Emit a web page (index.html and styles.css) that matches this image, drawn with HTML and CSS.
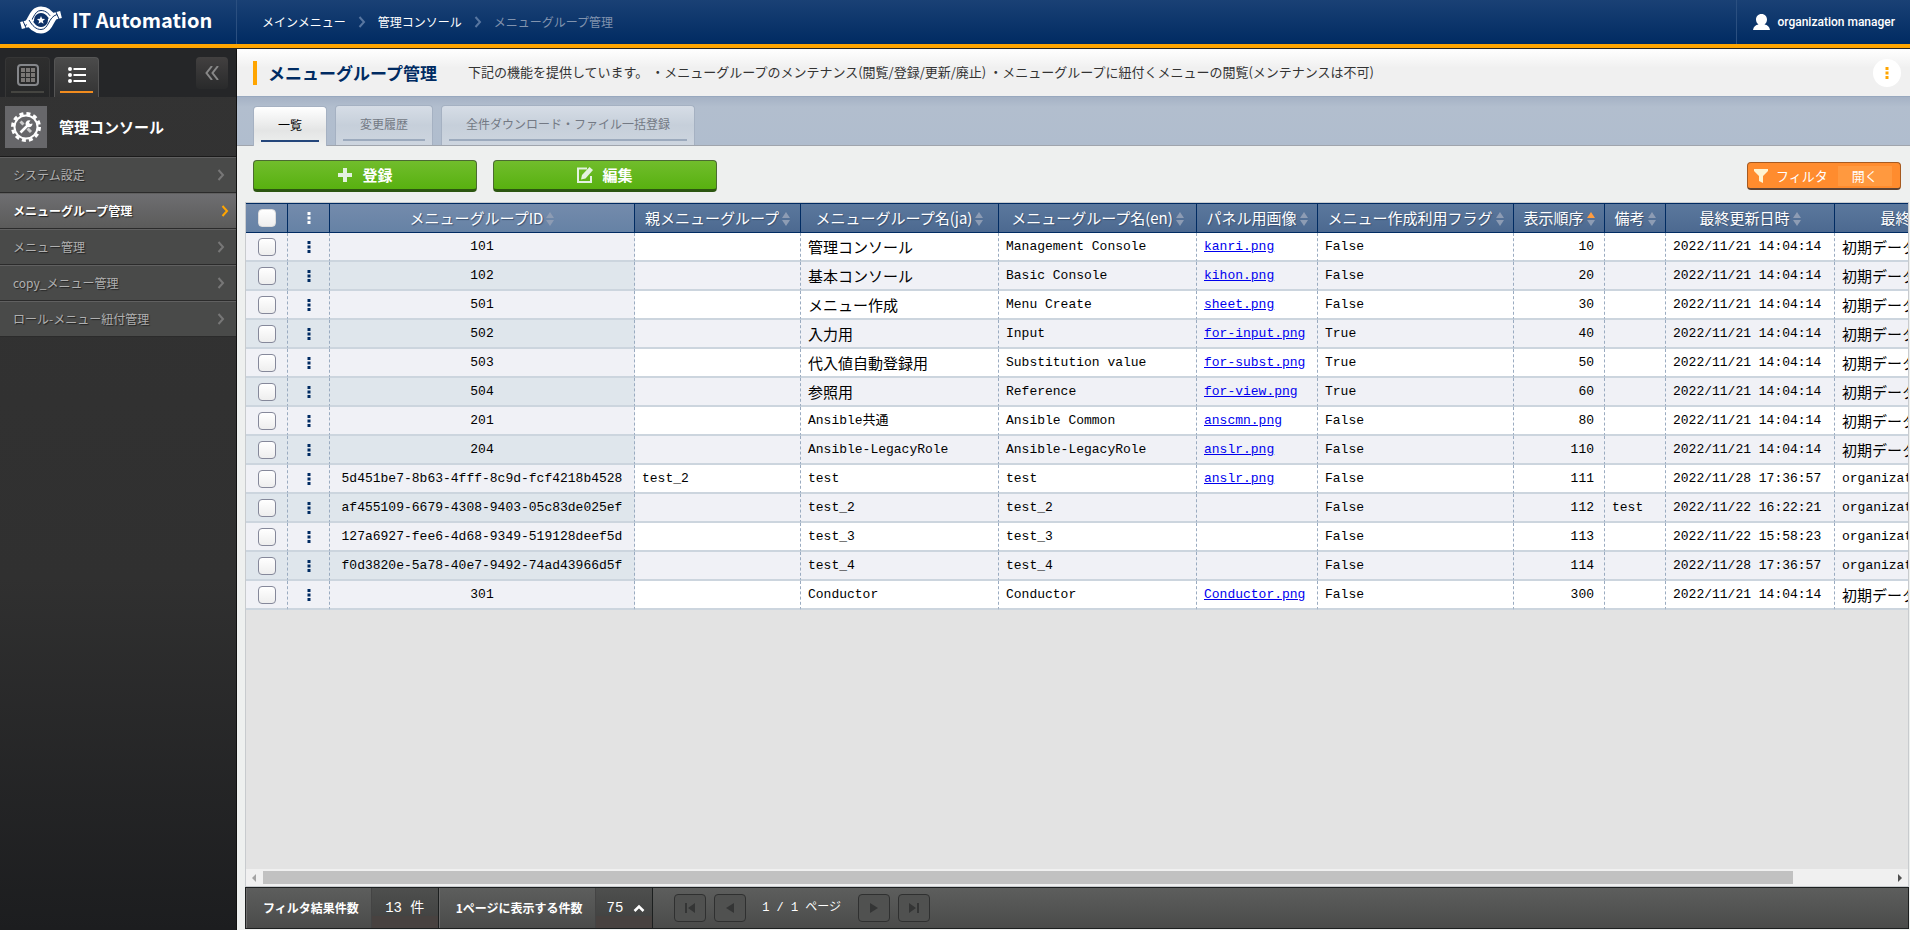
FILE: index.html
```html
<!doctype html>
<html lang="ja">
<head>
    <meta charset="UTF-8">
    <meta name="viewport" content="width=device-width, initial-scale=1.0">
    <title>メニューグループ管理 | IT Automation</title>
    <link rel="stylesheet" href="styles.css">
</head>
<body>
    <!-- 共通アイコン -->
    <svg class="sprite" aria-hidden="true">
        <symbol id="arrow" viewBox="0 0 8 12"><path d="M1.500 1l4.500 5-4.500 5" fill="none" stroke="currentColor" stroke-width="2"/></symbol>
        <symbol id="dots" viewBox="0 0 4 14"><path d="M.5 1h3v3h-3zM.5 5.500h3v3h-3zM.5 10h3v3h-3z" fill="currentColor"/></symbol>
        <symbol id="sort" viewBox="0 0 8 14"><path d="M4 0l4 6H0z" fill="currentColor"/><path d="M4 14L0 8h8z" fill="#8d9cb4"/></symbol>
    </svg>

    <header class="header">
        <a class="logo" href="#">
            <svg class="logo-mark" viewBox="0 0 42 28">
                <g id="arm">
                    <path d="M1 19.500l6-1.500C12 15 12 4 21 4c6 0 10 4 13 10" fill="none" stroke="#fff" stroke-width="7"/>
                    <path d="M5 19.500C14 17 13 4.500 21 4.500c5 0 8.500 3.500 12 9.500" fill="none" stroke="#0d3167" stroke-width="1"/>
                    <path d="M3 15l3 7" stroke="#0d3167" stroke-width="1"/>
                </g>
                <use href="#arm" transform="rotate(180 21 14)"/>
                <circle cx="21" cy="14" r="7" fill="#0d3167"/>
                <path d="M21 10l1.100 2.800 3 .200-2.300 1.900.800 2.900-2.600-1.600-2.600 1.600.800-2.900-2.300-1.900 3-.200z" fill="#fff"/>
            </svg>
            <span>IT Automation</span>
        </a>
        <nav class="breadcrumb">
            <a href="#">メインメニュー</a>
            <svg class="arrow"><use href="#arrow"/></svg>
            <a href="#">管理コンソール</a>
            <svg class="arrow"><use href="#arrow"/></svg>
            <span class="current">メニューグループ管理</span>
        </nav>
        <button type="button" class="user">
            <svg class="user-icon" viewBox="0 0 17 16"><path d="M8.500 0C12 0 14 2.500 14 5.500c0 2-1 4-2.500 5 3 .5 5 2 5.500 5.500H0c.5-3.500 2.500-5 5.500-5.500C4 9.500 3 7.500 3 5.500 3 2.500 5 0 8.500 0z" fill="#fff"/></svg>
            organization manager
        </button>
    </header>

    <div class="container">
        <aside class="side">
            <div class="side-tabs">
                <button type="button" class="side-tab" aria-label="メニューグループ">
                    <svg class="icon-grid" viewBox="0 0 22 22"><rect x="1" y="1" width="20" height="20" rx="3" fill="none" stroke="#85878b" stroke-width="2"/><path d="M4 4h4v4H4zM9 4h4v4H9zM14 4h4v4h-4zM4 9h4v4H4zM9 9h4v4H9zM14 9h4v4h-4zM4 14h4v4H4zM9 14h4v4H9zM14 14h4v4h-4z" fill="#7b7876"/></svg>
                </button>
                <button type="button" class="side-tab open" aria-label="メニュー">
                    <svg class="icon-list" viewBox="0 0 18 16"><g fill="#fff"><circle cx="2" cy="2" r="2"/><circle cx="2" cy="8" r="2"/><circle cx="2" cy="14" r="2"/><path d="M5.500 1H18v2H5.500zM5.500 7H18v2H5.500zM5.500 13H18v2H5.500z"/></g></svg>
                </button>
                <button type="button" class="side-close" aria-label="閉じる">
                    <svg class="icon-close" viewBox="0 0 14 14"><path d="M7 0L1.500 7 7 14M13 0L7.500 7 13 14" fill="none" stroke="currentColor" stroke-width="2"/></svg>
                </button>
            </div>
            <div class="side-title">
                <span class="side-title-icon">
                    <svg class="icon-gear" viewBox="0 0 30 30">
                        <circle cx="15" cy="15" r="13.500" fill="none" stroke="#fff" stroke-width="3" stroke-dasharray="4 3.070"/>
                        <circle cx="15" cy="15" r="11.500" fill="none" stroke="#fff" stroke-width="2"/>
                        <path d="M9.500 9.500l3 3M16.500 16.500l3.500 3.500" stroke="#ccc" stroke-width="3"/>
                        <path d="M9.500 20.500l8-8" stroke="#fff" stroke-width="2.500"/>
                        <path d="M19.500 8.500a3.500 3.500 0 1 0 2 3l-2.500.500-1-1.500z" fill="#fff"/>
                    </svg>
                </span>
                管理コンソール
            </div>
            <ul class="side-menu">
                <li><a href="#">システム設定<svg class="arrow"><use href="#arrow"/></svg></a></li>
                <li><a href="#" class="current">メニューグループ管理<svg class="arrow"><use href="#arrow"/></svg></a></li>
                <li><a href="#">メニュー管理<svg class="arrow"><use href="#arrow"/></svg></a></li>
                <li><a href="#">copy_メニュー管理<svg class="arrow"><use href="#arrow"/></svg></a></li>
                <li><a href="#">ロール-メニュー紐付管理<svg class="arrow"><use href="#arrow"/></svg></a></li>
            </ul>
        </aside>

        <main class="main">
            <div class="page-header">
                <h1>メニューグループ管理</h1>
                <p>下記の機能を提供しています。 ・メニューグループのメンテナンス(閲覧/登録/更新/廃止) ・メニューグループに紐付くメニューの閲覧(メンテナンスは不可)</p>
                <button type="button" class="page-menu" aria-label="メニュー"><svg class="dots"><use href="#dots"/></svg></button>
            </div>
            <div class="tabs">
                <button type="button" class="tab open"><span>一覧</span></button>
                <button type="button" class="tab"><span>変更履歴</span></button>
                <button type="button" class="tab"><span>全件ダウンロード・ファイル一括登録</span></button>
            </div>
            <div class="toolbar">
                <button type="button" class="action">
                    <svg class="action-icon" viewBox="0 0 16 16"><path d="M6 1h4v5h5v4h-5v5H6v-5H1V6h5z" fill="#e4f2e0"/></svg>登録
                </button>
                <button type="button" class="action">
                    <svg class="action-icon" viewBox="0 0 16 16"><path d="M10 1.500H1v13.500h13V9" fill="none" stroke="#e4f2e0" stroke-width="2"/><path d="M4 12.500l1-4.500L12.500 0 16 3 8.500 11.500z" fill="#e4f2e0"/></svg>編集
                </button>
                <button type="button" class="filter">
                    <svg class="filter-icon" viewBox="0 0 14 14"><path d="M0 0h14v2L9 7v7l-4-2V7L0 2z" fill="#fff3d0"/></svg>
                    <span class="filter-name">フィルタ</span>
                    <span class="filter-state">開く</span>
                </button>
            </div>

            <div class="table-box">
                <div class="table-scroll">
                    <table>
                        <colgroup>
                            <col class="w-check"><col class="w-menu"><col class="w-id"><col class="w-parent"><col class="w-ja"><col class="w-en"><col class="w-image"><col class="w-flag"><col class="w-order"><col class="w-note"><col class="w-date"><col class="w-user">
                        </colgroup>
                        <thead>
                            <tr>
                                <th class="fix"><input type="checkbox" aria-label="すべて選択"></th>
                                <th class="fix"><svg class="dots"><use href="#dots"/></svg></th>
                                <th class="fix">メニューグループID<svg class="sort"><use href="#sort"/></svg></th>
                                <th>親メニューグループ<svg class="sort"><use href="#sort"/></svg></th>
                                <th>メニューグループ名(ja)<svg class="sort"><use href="#sort"/></svg></th>
                                <th>メニューグループ名(en)<svg class="sort"><use href="#sort"/></svg></th>
                                <th>パネル用画像<svg class="sort"><use href="#sort"/></svg></th>
                                <th>メニュー作成利用フラグ<svg class="sort"><use href="#sort"/></svg></th>
                                <th>表示順序<svg class="sort asc"><use href="#sort"/></svg></th>
                                <th>備考<svg class="sort"><use href="#sort"/></svg></th>
                                <th>最終更新日時<svg class="sort"><use href="#sort"/></svg></th>
                                <th>最終更新者<svg class="sort"><use href="#sort"/></svg></th>
                            </tr>
                        </thead>
                        <tbody>
                            <tr>
                                <td class="fix"><input type="checkbox" aria-label="101"></td>
                                <td class="fix"><svg class="dots"><use href="#dots"/></svg></td>
                                <td class="fix">101</td>
                                <td></td>
                                <td class="ja">管理コンソール</td>
                                <td>Management Console</td>
                                <td><a href="#">kanri.png</a></td>
                                <td>False</td>
                                <td class="num">10</td>
                                <td></td>
                                <td>2022/11/21 14:04:14</td>
                                <td class="ja">初期データ</td>
                            </tr>
                            <tr>
                                <td class="fix"><input type="checkbox" aria-label="102"></td>
                                <td class="fix"><svg class="dots"><use href="#dots"/></svg></td>
                                <td class="fix">102</td>
                                <td></td>
                                <td class="ja">基本コンソール</td>
                                <td>Basic Console</td>
                                <td><a href="#">kihon.png</a></td>
                                <td>False</td>
                                <td class="num">20</td>
                                <td></td>
                                <td>2022/11/21 14:04:14</td>
                                <td class="ja">初期データ</td>
                            </tr>
                            <tr>
                                <td class="fix"><input type="checkbox" aria-label="501"></td>
                                <td class="fix"><svg class="dots"><use href="#dots"/></svg></td>
                                <td class="fix">501</td>
                                <td></td>
                                <td class="ja">メニュー作成</td>
                                <td>Menu Create</td>
                                <td><a href="#">sheet.png</a></td>
                                <td>False</td>
                                <td class="num">30</td>
                                <td></td>
                                <td>2022/11/21 14:04:14</td>
                                <td class="ja">初期データ</td>
                            </tr>
                            <tr>
                                <td class="fix"><input type="checkbox" aria-label="502"></td>
                                <td class="fix"><svg class="dots"><use href="#dots"/></svg></td>
                                <td class="fix">502</td>
                                <td></td>
                                <td class="ja">入力用</td>
                                <td>Input</td>
                                <td><a href="#">for-input.png</a></td>
                                <td>True</td>
                                <td class="num">40</td>
                                <td></td>
                                <td>2022/11/21 14:04:14</td>
                                <td class="ja">初期データ</td>
                            </tr>
                            <tr>
                                <td class="fix"><input type="checkbox" aria-label="503"></td>
                                <td class="fix"><svg class="dots"><use href="#dots"/></svg></td>
                                <td class="fix">503</td>
                                <td></td>
                                <td class="ja">代入値自動登録用</td>
                                <td>Substitution value</td>
                                <td><a href="#">for-subst.png</a></td>
                                <td>True</td>
                                <td class="num">50</td>
                                <td></td>
                                <td>2022/11/21 14:04:14</td>
                                <td class="ja">初期データ</td>
                            </tr>
                            <tr>
                                <td class="fix"><input type="checkbox" aria-label="504"></td>
                                <td class="fix"><svg class="dots"><use href="#dots"/></svg></td>
                                <td class="fix">504</td>
                                <td></td>
                                <td class="ja">参照用</td>
                                <td>Reference</td>
                                <td><a href="#">for-view.png</a></td>
                                <td>True</td>
                                <td class="num">60</td>
                                <td></td>
                                <td>2022/11/21 14:04:14</td>
                                <td class="ja">初期データ</td>
                            </tr>
                            <tr>
                                <td class="fix"><input type="checkbox" aria-label="201"></td>
                                <td class="fix"><svg class="dots"><use href="#dots"/></svg></td>
                                <td class="fix">201</td>
                                <td></td>
                                <td>Ansible共通</td>
                                <td>Ansible Common</td>
                                <td><a href="#">anscmn.png</a></td>
                                <td>False</td>
                                <td class="num">80</td>
                                <td></td>
                                <td>2022/11/21 14:04:14</td>
                                <td class="ja">初期データ</td>
                            </tr>
                            <tr>
                                <td class="fix"><input type="checkbox" aria-label="204"></td>
                                <td class="fix"><svg class="dots"><use href="#dots"/></svg></td>
                                <td class="fix">204</td>
                                <td></td>
                                <td>Ansible-LegacyRole</td>
                                <td>Ansible-LegacyRole</td>
                                <td><a href="#">anslr.png</a></td>
                                <td>False</td>
                                <td class="num">110</td>
                                <td></td>
                                <td>2022/11/21 14:04:14</td>
                                <td class="ja">初期データ</td>
                            </tr>
                            <tr>
                                <td class="fix"><input type="checkbox" aria-label="test"></td>
                                <td class="fix"><svg class="dots"><use href="#dots"/></svg></td>
                                <td class="fix">5d451be7-8b63-4fff-8c9d-fcf4218b4528</td>
                                <td>test_2</td>
                                <td>test</td>
                                <td>test</td>
                                <td><a href="#">anslr.png</a></td>
                                <td>False</td>
                                <td class="num">111</td>
                                <td></td>
                                <td>2022/11/28 17:36:57</td>
                                <td>organization manager</td>
                            </tr>
                            <tr>
                                <td class="fix"><input type="checkbox" aria-label="test_2"></td>
                                <td class="fix"><svg class="dots"><use href="#dots"/></svg></td>
                                <td class="fix">af455109-6679-4308-9403-05c83de025ef</td>
                                <td></td>
                                <td>test_2</td>
                                <td>test_2</td>
                                <td></td>
                                <td>False</td>
                                <td class="num">112</td>
                                <td>test</td>
                                <td>2022/11/22 16:22:21</td>
                                <td>organization manager</td>
                            </tr>
                            <tr>
                                <td class="fix"><input type="checkbox" aria-label="test_3"></td>
                                <td class="fix"><svg class="dots"><use href="#dots"/></svg></td>
                                <td class="fix">127a6927-fee6-4d68-9349-519128deef5d</td>
                                <td></td>
                                <td>test_3</td>
                                <td>test_3</td>
                                <td></td>
                                <td>False</td>
                                <td class="num">113</td>
                                <td></td>
                                <td>2022/11/22 15:58:23</td>
                                <td>organization manager</td>
                            </tr>
                            <tr>
                                <td class="fix"><input type="checkbox" aria-label="test_4"></td>
                                <td class="fix"><svg class="dots"><use href="#dots"/></svg></td>
                                <td class="fix">f0d3820e-5a78-40e7-9492-74ad43966d5f</td>
                                <td></td>
                                <td>test_4</td>
                                <td>test_4</td>
                                <td></td>
                                <td>False</td>
                                <td class="num">114</td>
                                <td></td>
                                <td>2022/11/28 17:36:57</td>
                                <td>organization manager</td>
                            </tr>
                            <tr>
                                <td class="fix"><input type="checkbox" aria-label="301"></td>
                                <td class="fix"><svg class="dots"><use href="#dots"/></svg></td>
                                <td class="fix">301</td>
                                <td></td>
                                <td>Conductor</td>
                                <td>Conductor</td>
                                <td><a href="#">Conductor.png</a></td>
                                <td>False</td>
                                <td class="num">300</td>
                                <td></td>
                                <td>2022/11/21 14:04:14</td>
                                <td class="ja">初期データ</td>
                            </tr>
                        </tbody>
                    </table>
                </div>
                <div class="scrollbar">
                    <svg class="scroll-arrow" viewBox="0 0 17 17"><path d="M10 5v8L6 9z" fill="#a3a3a3"/></svg>
                    <div class="scroll-track"><div class="scroll-thumb"></div></div>
                    <svg class="scroll-arrow" viewBox="0 0 17 17"><path d="M7 5v8l4-4z" fill="#505050"/></svg>
                </div>
            </div>

            <footer class="table-footer">
                <div class="foot-label">フィルタ結果件数</div>
                <div class="foot-value foot-count">13 件</div>
                <label class="foot-label" for="rows">1ページに表示する件数</label>
                <div class="foot-value foot-select">
                    <select id="rows"><option>75</option></select>
                    <svg class="icon-up" viewBox="0 0 12 8"><path d="M1.500 7L6 2.500 10.500 7" fill="none" stroke="#fff" stroke-width="2.500"/></svg>
                </div>
                <div class="paging">
                    <button type="button" disabled aria-label="最初"><svg viewBox="0 0 10 12"><path d="M0 1h2v10H0zM10 1v10L3 6z"/></svg></button>
                    <button type="button" disabled aria-label="前"><svg viewBox="0 0 10 12"><path d="M9 1v10L1 6z"/></svg></button>
                    <span>1 / 1 ページ</span>
                    <button type="button" disabled aria-label="次"><svg viewBox="0 0 10 12"><path d="M1 1v10l8-5z"/></svg></button>
                    <button type="button" disabled aria-label="最後"><svg viewBox="0 0 10 12"><path d="M8 1h2v10H8zM0 1v10l7-5z"/></svg></button>
                </div>
            </footer>
        </main>
    </div>
</body>
</html>
```
FILE: styles.css
```css
* {
    box-sizing: border-box;
}
body {
    display: flex;
    flex-direction: column;
    height: 100vh;
    margin: 0;

    font: 12px/20px "Noto Sans CJK JP", sans-serif;
    color: #222;
    background: #eef0ef;
}
button {
    padding: 0;
    border: 0;
    font: inherit;
    color: inherit;
    background: none;
}
.header a,
.side a {
    text-decoration: none;
    color: inherit;
}
svg {
    display: block;
    flex: none;
}
.sprite {
    position: absolute;
    width: 0;
    height: 0;
}
.arrow {
    width: 8px;
    height: 12px;
}
.dots {
    width: 4px;
    height: 14px;
    margin: 0 auto;
}

/* ヘッダー */
.header {
    display: flex;
    flex: none;
    height: 49px;
    border-bottom: 1px solid #222;

    color: #fff;
    background: linear-gradient(#1a4175, #002b62 44px, #ffa500 44px);
}
.logo {
    display: flex;
    align-items: center;
    width: 237px;
    height: 44px;
    padding: 0 0 4px 20px;
    border-right: 1px solid #2b4f80;

    font-size: 20px;
    font-weight: bold;
}
.logo-mark {
    width: 42px;
    height: 28px;
    margin-right: 10px;
}
.breadcrumb {
    display: flex;
    flex: 1;
    align-items: center;
    gap: 12px;
    height: 44px;
    padding-left: 25px;
}
.breadcrumb .arrow {
    color: #5876a0;
}
.breadcrumb .current {
    color: #8193ae;
}
.user {
    display: flex;
    align-items: center;
    height: 44px;
    padding: 0 15px 0 16px;
    border-left: 1px solid #2b4f80;

    font: 500 12px Roboto, sans-serif;
}
.user-icon {
    width: 17px;
    height: 16px;
    margin-right: 7px;
}

.container {
    display: flex;
    flex: 1;
    min-height: 0;
}

/* サイドメニュー */
.side {
    flex: none;
    width: 237px;
    border-right: 1px solid #111;

    color: #fff;
    background: linear-gradient(#333, #303030 60%, #1c1d1f);
}
.side-tabs {
    display: flex;
    height: 48px;
    padding: 8px 8px 0 5px;

    background: #252628;
}
.side-tab {
    position: relative;
    display: flex;
    align-items: center;
    justify-content: center;
    width: 45px;
    margin-right: 4px;
    padding-bottom: 6px;
    border: 1px solid #363636;
    border-bottom: 0;
    border-radius: 4px 4px 0 0;

    background: linear-gradient(#2e2e2e, #262728);
}
.side-tab::after {
    content: "";
    position: absolute;
    right: 5px;
    bottom: 4px;
    left: 5px;
    height: 2px;

    background: #454541;
}
.side-tab.open {
    border-color: #555;

    background: linear-gradient(#4b4b4b, #333);
}
.side-tab.open::after {
    background: #f28c1e;
}
.icon-grid {
    width: 22px;
    height: 22px;
}
.icon-list {
    width: 18px;
    height: 16px;
}
.side-close {
    display: flex;
    align-items: center;
    justify-content: center;
    width: 32px;
    height: 32px;
    margin-left: auto;
    border-radius: 4px;

    color: #888;
    background: linear-gradient(#424040, #292a2b);
}
.icon-close {
    width: 14px;
    height: 14px;
}
.side-title {
    display: flex;
    align-items: center;
    gap: 12px;
    height: 60px;
    padding-left: 5px;
    border-bottom: 1px solid #1b1b1b;

    font-size: 15px;
    font-weight: bold;
}
.side-title-icon {
    display: flex;
    align-items: center;
    justify-content: center;
    width: 42px;
    height: 42px;

    background: #67676a;
}
.icon-gear {
    width: 30px;
    height: 30px;
}
.side-menu {
    margin: 0;
    padding: 0;

    list-style: none;
}
.side-menu a {
    display: flex;
    align-items: center;
    justify-content: space-between;
    height: 36px;
    padding: 0 11px 0 13px;
    border-top: 1px solid #606060;
    border-bottom: 1px solid #2b2b2b;

    color: #b0b0b0;
    background: #494a49;
    text-shadow: 1px 1px 1px #222;
}
.side-menu .arrow {
    color: #777;
}
.side-menu .current {
    padding-right: 7px;

    font-weight: bold;
    color: #fff;
    background: linear-gradient(#6e6e71, #5b5b5a);
}
.side-menu .current .arrow {
    color: #ffa500;
}

/* メイン */
.main {
    display: flex;
    flex: 1;
    flex-direction: column;
    min-width: 0;
}
.page-header {
    display: flex;
    flex: none;
    align-items: center;
    height: 47px;
    padding: 0 9px 0 16px;

    background: linear-gradient(#fff, #f0f0f0 40%);
}
.page-header h1 {
    margin: 0;
    padding-left: 11px;
    border-left: 4px solid #ffa500;

    font-size: 17px;
    line-height: 24px;
    color: #002b62;
}
.page-header p {
    flex: 1;
    margin: 0 0 2px 31px;

    font-size: 13px;
    white-space: nowrap;
    color: #333;
}
.page-menu {
    width: 28px;
    height: 28px;
    border-radius: 50%;

    color: #ffa500;
    background: #fff;
}
.tabs {
    display: flex;
    flex: none;
    gap: 8px;
    align-items: flex-end;
    height: 50px;
    padding-left: 16px;
    border-top: 1px solid #98a8be;
    border-bottom: 1px solid #a0a5ad;

    background: linear-gradient(#a5b2c5, #b2bece 10px, #b0bdce);
}
.tab {
    position: relative;
    height: 40px;
    padding: 0 24px 4px;
    border: 1px solid #a5b1c2;
    border-bottom: 0;
    border-radius: 4px 4px 0 0;

    color: #737984;
    background: linear-gradient(#d6dde6, #c6cfda 50%, #cdd5df);
}
.tab::after {
    content: "";
    position: absolute;
    right: 7px;
    bottom: 4px;
    left: 7px;
    height: 2px;

    background: #9caabd;
}
.tab.open {
    margin-bottom: -1px;

    color: #000;
    background: linear-gradient(#fff, #e4e5e5 60%, #eef0ef);
}
.tab.open::after {
    background: #24477b;
}
.toolbar {
    display: flex;
    flex: none;
    gap: 16px;
    height: 56px;
    padding: 14px 9px 0 16px;
}
.action {
    display: flex;
    align-items: center;
    justify-content: center;
    gap: 9px;
    width: 224px;
    height: 32px;
    border: 1px solid #4b6a32;
    border-bottom: 3px solid #2c5610;
    border-radius: 4px;

    font-size: 15px;
    font-weight: bold;
    color: #fff;
    background: linear-gradient(#71bd2c, #58b110);
}
.action-icon {
    width: 16px;
    height: 16px;
}
.filter {
    display: flex;
    align-items: center;
    width: 154px;
    height: 28px;
    margin: 2px 0 0 auto;
    padding-left: 6px;
    border: 1px solid #a65a20;
    border-bottom: 2px solid #5f4433;
    border-radius: 4px;

    font-size: 13px;
    color: #fff;
    background: #ff8c2e;
}
.filter-icon {
    width: 14px;
    height: 14px;
}
.filter-name {
    margin-left: 8px;
}
.filter-state {
    margin-left: 10px;
    padding: 0 14px;

    background: #ff993f;
}

/* 一覧表 */
.table-box {
    display: flex;
    flex: 1;
    flex-direction: column;
    min-height: 0;
    margin: 0 1px 0 8px;
    border: 1px solid #c8cbce;

    background: #e3e3e3;
}
.table-scroll {
    flex: 1;
    overflow: hidden;
}
table {
    width: 1767px;
    border-collapse: separate;
    border-spacing: 0;
    table-layout: fixed;
}
.w-check,
.w-menu {
    width: 42px;
}
.w-id {
    width: 305px;
}
.w-parent {
    width: 166px;
}
.w-ja,
.w-en {
    width: 198px;
}
.w-image {
    width: 121px;
}
.w-flag {
    width: 196px;
}
.w-order {
    width: 91px;
}
.w-note {
    width: 61px;
}
.w-date {
    width: 169px;
}
.w-user {
    width: 178px;
}
th,
td {
    height: 29px;
    padding: 0 7px;

    white-space: nowrap;
}
th {
    height: 30px;
    border: 1px solid #002b62;
    border-width: 1px 1px 1px 0;

    font-size: 15px;
    font-weight: normal;
    color: #fff;
    background: linear-gradient(#5b789d, #4c6990);
    text-shadow: 1px 1px 1px #3a5070;
}
th.fix {
    background: linear-gradient(#748bac, #6682a5);
}
td {
    border-right: 1px dashed #9aabc0;
    border-bottom: 2px solid #ccd5de;

    font-family: "Liberation Mono", "Noto Sans CJK JP", monospace;
    font-size: 13px;
    color: #000;
    background: #fff;
}
tr:nth-child(even) td,
td.fix {
    background: #f0f1f6;
}
tr:nth-child(even) td.fix {
    background: #dfe6ec;
}
td.fix {
    text-align: center;
}
td.ja {
    font-family: "Noto Sans CJK JP", sans-serif;
    font-size: 15px;
}
td.num {
    padding-right: 10px;

    text-align: right;
}
td .dots {
    color: #002b62;
}
td a {
    color: #00e;
}
.sort {
    display: inline-block;
    width: 8px;
    height: 14px;
    margin-left: 3px;

    vertical-align: -2px;
    color: #8d9cb4;
}
.sort.asc {
    color: #ff9c40;
}
input[type="checkbox"] {
    display: block;
    width: 18px;
    height: 18px;
    margin: 0 auto;
    border: 1px solid #85889a;
    border-radius: 4px;
    -webkit-appearance: none;
    appearance: none;

    background: linear-gradient(#fff, #eee);
}
th input[type="checkbox"] {
    border-color: #ddd;
}
.scrollbar {
    display: flex;
    flex: none;
    height: 17px;

    background: #f0f0f0;
}
.scroll-arrow {
    width: 17px;
    height: 17px;
}
.scroll-track {
    flex: 1;
    padding: 2px 0;
}
.scroll-thumb {
    width: 94%;
    height: 13px;

    background: #c1c1c1;
}

/* フッター */
.table-footer {
    display: flex;
    flex: none;
    height: 42px;
    margin: 0 1px 1px 8px;
    border: 1px solid #1c1f1f;

    line-height: 40px;
    color: #fff;
    background: linear-gradient(#5d5e5d, #4a4b4a);
}
.foot-label {
    padding: 0 12px 0 16px;
    border-left: 1px solid #6b6b6b;

    font-weight: bold;
}
.foot-value {
    border-right: 1px solid #1c1f1f;
    border-left: 1px solid #444;

    font-family: "Liberation Mono", "Noto Sans CJK JP", monospace;
    font-size: 14px;
    background: linear-gradient(#4e4f4e, #434443 70%, #484240 70%);
}
.foot-count {
    width: 68px;

    text-align: center;
}
.foot-select {
    display: flex;
    align-items: center;
    width: 58px;
    padding-left: 11px;
}
.foot-select select {
    width: 26px;
    padding: 0;
    border: 0;
    -webkit-appearance: none;
    appearance: none;

    font: inherit;
    color: #fff;
    background: none;
}
.icon-up {
    width: 12px;
    height: 8px;
}
.paging {
    display: flex;
    align-items: center;
    gap: 8px;
    padding-left: 21px;
}
.paging span {
    width: 96px;

    font-family: "Liberation Mono", "Noto Sans CJK JP", monospace;
    text-align: center;
}
.paging button {
    display: flex;
    align-items: center;
    justify-content: center;
    width: 32px;
    height: 28px;
    border: 1px solid #2f3030;
    border-radius: 4px;

    background: #505150;
}
.paging svg {
    width: 10px;
    height: 12px;
    fill: #343535;
}
```
